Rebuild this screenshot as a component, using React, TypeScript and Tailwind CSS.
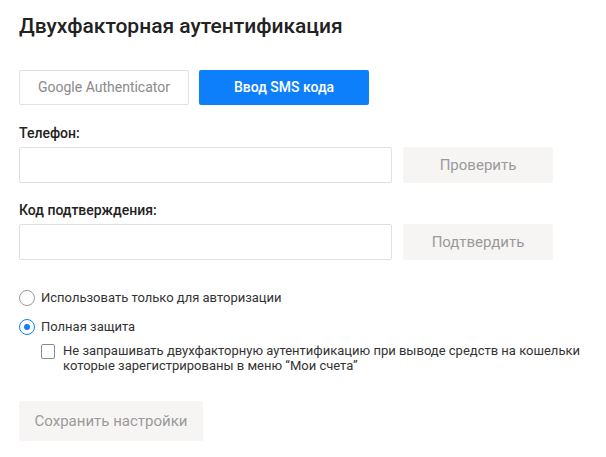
import React from "react";

export default function App() {
  return (
    <div className="w-[606px] h-[457px] bg-white pl-[19px] pt-[12px] text-[#222]" style={{ fontFamily: "Roboto, 'Liberation Sans', sans-serif" }}>
      <h1 className="text-[21px] leading-[28px] font-medium text-[#222]">Двухфакторная аутентификация</h1>
      <div className="flex gap-[10px] mt-[30px]">
        <button className="w-[170px] h-[35px] border border-[#e2e2e2] rounded-[2px] text-[14px] text-[#8a8a8a] bg-white">Google Authenticator</button>
        <button className="w-[170px] h-[35px] rounded-[2px] text-[14px] font-medium text-white bg-[#0e7ffb]">Ввод SMS кода</button>
      </div>
      <div className="mt-[18px] text-[14px] leading-[20px] font-medium text-[#222]">Телефон:</div>
      <div className="flex gap-[11px] mt-[4px]">
        <input className="w-[373px] h-[36px] border border-[#e0e0e0] rounded-[2px] outline-none" />
        <button className="w-[150px] h-[36px] rounded-[2px] bg-[#f6f5f4] text-[15px] text-[#9a9a9a]">Проверить</button>
      </div>
      <div className="mt-[17px] text-[14px] leading-[20px] font-medium text-[#222]">Код подтверждения:</div>
      <div className="flex gap-[11px] mt-[4px]">
        <input className="w-[373px] h-[36px] border border-[#e0e0e0] rounded-[2px] outline-none" />
        <button className="w-[150px] h-[36px] rounded-[2px] bg-[#f6f5f4] text-[15px] text-[#9a9a9a]">Подтвердить</button>
      </div>
      <div className="mt-[30px] flex items-center gap-[6px] h-[15px]">
        <span className="w-[16px] h-[16px] rounded-full border border-[#9a9a9a] shrink-0" />
        <span className="text-[13px] text-[#333]">Использовать только для авторизации</span>
      </div>
      <div className="mt-[14px] flex items-center gap-[6px] h-[15px]">
        <span className="w-[16px] h-[16px] rounded-full border border-[#0e7ffb] shrink-0 flex items-center justify-center">
          <span className="w-[6px] h-[6px] rounded-full bg-[#0e7ffb]" />
        </span>
        <span className="text-[13px] text-[#333]">Полная защита</span>
      </div>
      <div className="mt-[9px] ml-[22px] flex items-start gap-[8px]">
        <span className="w-[14px] h-[15px] rounded-[2px] border border-[#8a8a8a] shrink-0 mt-[1px]" />
        <span className="text-[13px] leading-[15px] text-[#333]">
          Не запрашивать двухфакторную аутентификацию при выводе средств на кошельки<br />которые зарегистрированы в меню “Мои счета”
        </span>
      </div>
      <button className="mt-[28px] w-[184px] h-[40px] rounded-[2px] bg-[#f6f5f4] text-[15px] text-[#9a9a9a]">Сохранить настройки</button>
    </div>
  );
}
